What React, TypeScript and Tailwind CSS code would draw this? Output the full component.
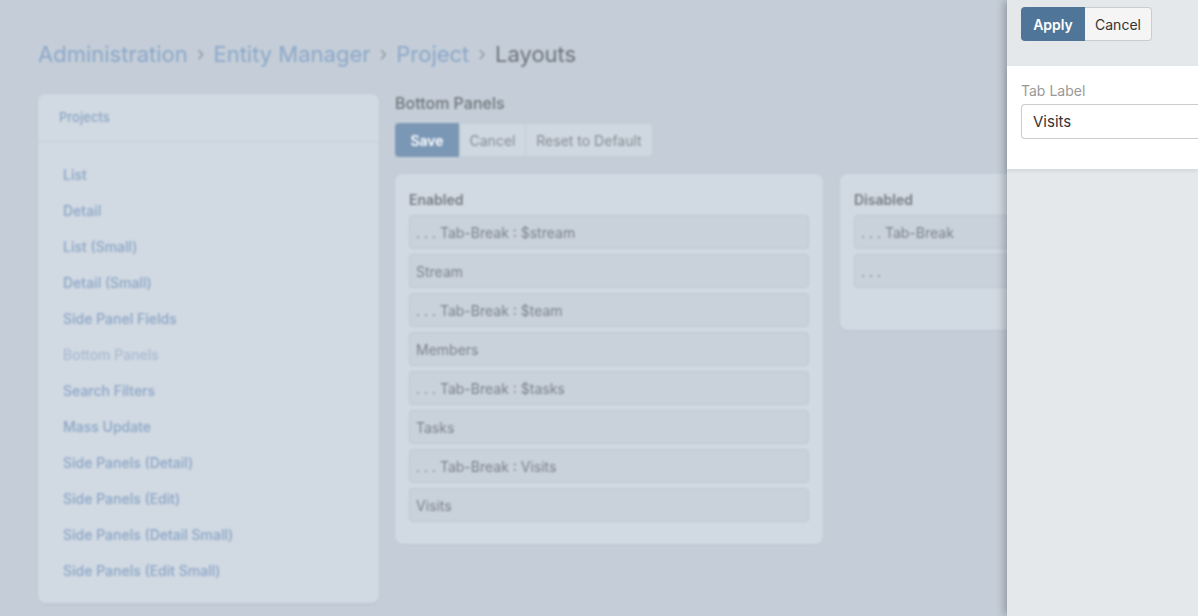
const layouts = [
  "List",
  "Detail",
  "List (Small)",
  "Detail (Small)",
  "Side Panel Fields",
  "Bottom Panels",
  "Search Filters",
  "Mass Update",
  "Side Panels (Detail)",
  "Side Panels (Edit)",
  "Side Panels (Detail Small)",
  "Side Panels (Edit Small)",
];

const enabled = [
  ". . . Tab-Break : $stream",
  "Stream",
  ". . . Tab-Break : $team",
  "Members",
  ". . . Tab-Break : $tasks",
  "Tasks",
  ". . . Tab-Break : Visits",
  "Visits",
];

const disabled = [". . . Tab-Break", ". . ."];

function Item({ label }: { label: string }) {
  return (
    <div className="h-[34px] flex items-center px-[6px] rounded-[4px] bg-[#c9d1db] border border-[#bec7d1] text-[14px] text-[#7b828a]">
      {label}
    </div>
  );
}

function Panel({ title, items, className }: { title: string; items: string[]; className?: string }) {
  return (
    <div className={"bg-[#d1d9e2] rounded-[8px] px-[14px] pt-[15px] shadow-[0_1px_2px_rgba(0,0,0,0.05)] " + (className ?? "")}>
      <div className="text-[14px] font-semibold text-[#767c83] mb-[5px]">{title}</div>
      <div className="flex flex-col gap-[5px]">
        {items.map((i) => (
          <Item key={i} label={i} />
        ))}
      </div>
    </div>
  );
}

export default function App() {
  return (
    <div className="relative h-screen overflow-hidden bg-[#c5ced8] font-['Inter',sans-serif]">
      {/* page behind the drawer, blurred */}
      <div className="blur-[1.2px] pl-[38px] pt-[40px]">
        <div className="flex items-center gap-[9px] text-[22px] leading-[28px]">
          <span className="text-[#8ba7c9]">Administration</span>
          <span className="text-[#949ba3] text-[20px]">›</span>
          <span className="text-[#8ba7c9]">Entity Manager</span>
          <span className="text-[#949ba3] text-[20px]">›</span>
          <span className="text-[#8ba7c9]">Project</span>
          <span className="text-[#949ba3] text-[20px]">›</span>
          <span className="text-[#6c7279]">Layouts</span>
        </div>

        <div className="flex gap-[16px] mt-[26px]">
          <div className="w-[341px] h-[509px] shrink-0 bg-[#d1d9e2] rounded-[8px] shadow-[0_1px_3px_rgba(0,0,0,0.06)]">
            <div className="h-[48px] flex items-center px-[21px] border-b border-[#c6ced8] text-[13px] font-medium text-[#8ca6c7]">
              Projects
            </div>
            <div className="flex flex-col pt-[14px] px-[25px]">
              {layouts.map((l) => (
                <div
                  key={l}
                  className={
                    "h-[36px] flex items-center text-[14px] font-medium " +
                    (l === "Bottom Panels" ? "text-[#a9bbd1]" : "text-[#8ca6c7]")
                  }
                >
                  {l}
                </div>
              ))}
            </div>
          </div>

          <div className="flex-1">
            <div className="text-[16px] font-medium text-[#6e747b] leading-[20px] -mt-[1px]">Bottom Panels</div>
            <div className="flex mt-[10px] h-[34px] text-[14px]">
              <div className="w-[64px] flex items-center justify-center bg-[#7b97b6] text-white font-semibold rounded-l-[4px]">
                Save
              </div>
              <div className="w-[67px] flex items-center justify-center bg-[#cfd7e0] text-[#868d95] border border-[#c3ccd6]">
                Cancel
              </div>
              <div className="w-[127px] flex items-center justify-center bg-[#cfd7e0] text-[#868d95] border border-l-0 border-[#c3ccd6] rounded-r-[4px]">
                Reset to Default
              </div>
            </div>
            <div className="flex gap-[17px] mt-[17px] items-start">
              <Panel title="Enabled" items={enabled} className="w-[428px] pb-[22px]" />
              <Panel title="Disabled" items={disabled} className="w-[428px] pb-[42px]" />
            </div>
          </div>
        </div>
      </div>

      {/* side drawer */}
      <div className="absolute top-0 right-0 bottom-0 left-[1007px] bg-[#e4e8eb] shadow-[-3px_0_8px_rgba(0,0,0,0.25)]">
        <div className="flex px-[14px] pt-[7px] h-[66px] text-[14px]">
          <div className="h-[34px] w-[64px] flex items-center justify-center bg-[#4f7599] text-white font-semibold rounded-l-[4px]">
            Apply
          </div>
          <div className="h-[34px] w-[67px] flex items-center justify-center bg-[#f5f5f5] text-[#333] border border-[#cccccc] border-l-0 rounded-r-[4px]">
            Cancel
          </div>
        </div>
        <div className="bg-white pt-[17px] pb-[30px] pl-[14px] shadow-[0_2px_4px_rgba(0,0,0,0.08)]">
          <div className="text-[14px] text-[#999] leading-[16px] mb-[5px]">Tab Label</div>
          <div className="h-[35px] flex items-center pl-[11px] pt-[2px] border border-r-0 border-[#ccc] rounded-l-[4px] text-[15px] text-[#333]">
            Visits
          </div>
        </div>
      </div>
    </div>
  );
}
